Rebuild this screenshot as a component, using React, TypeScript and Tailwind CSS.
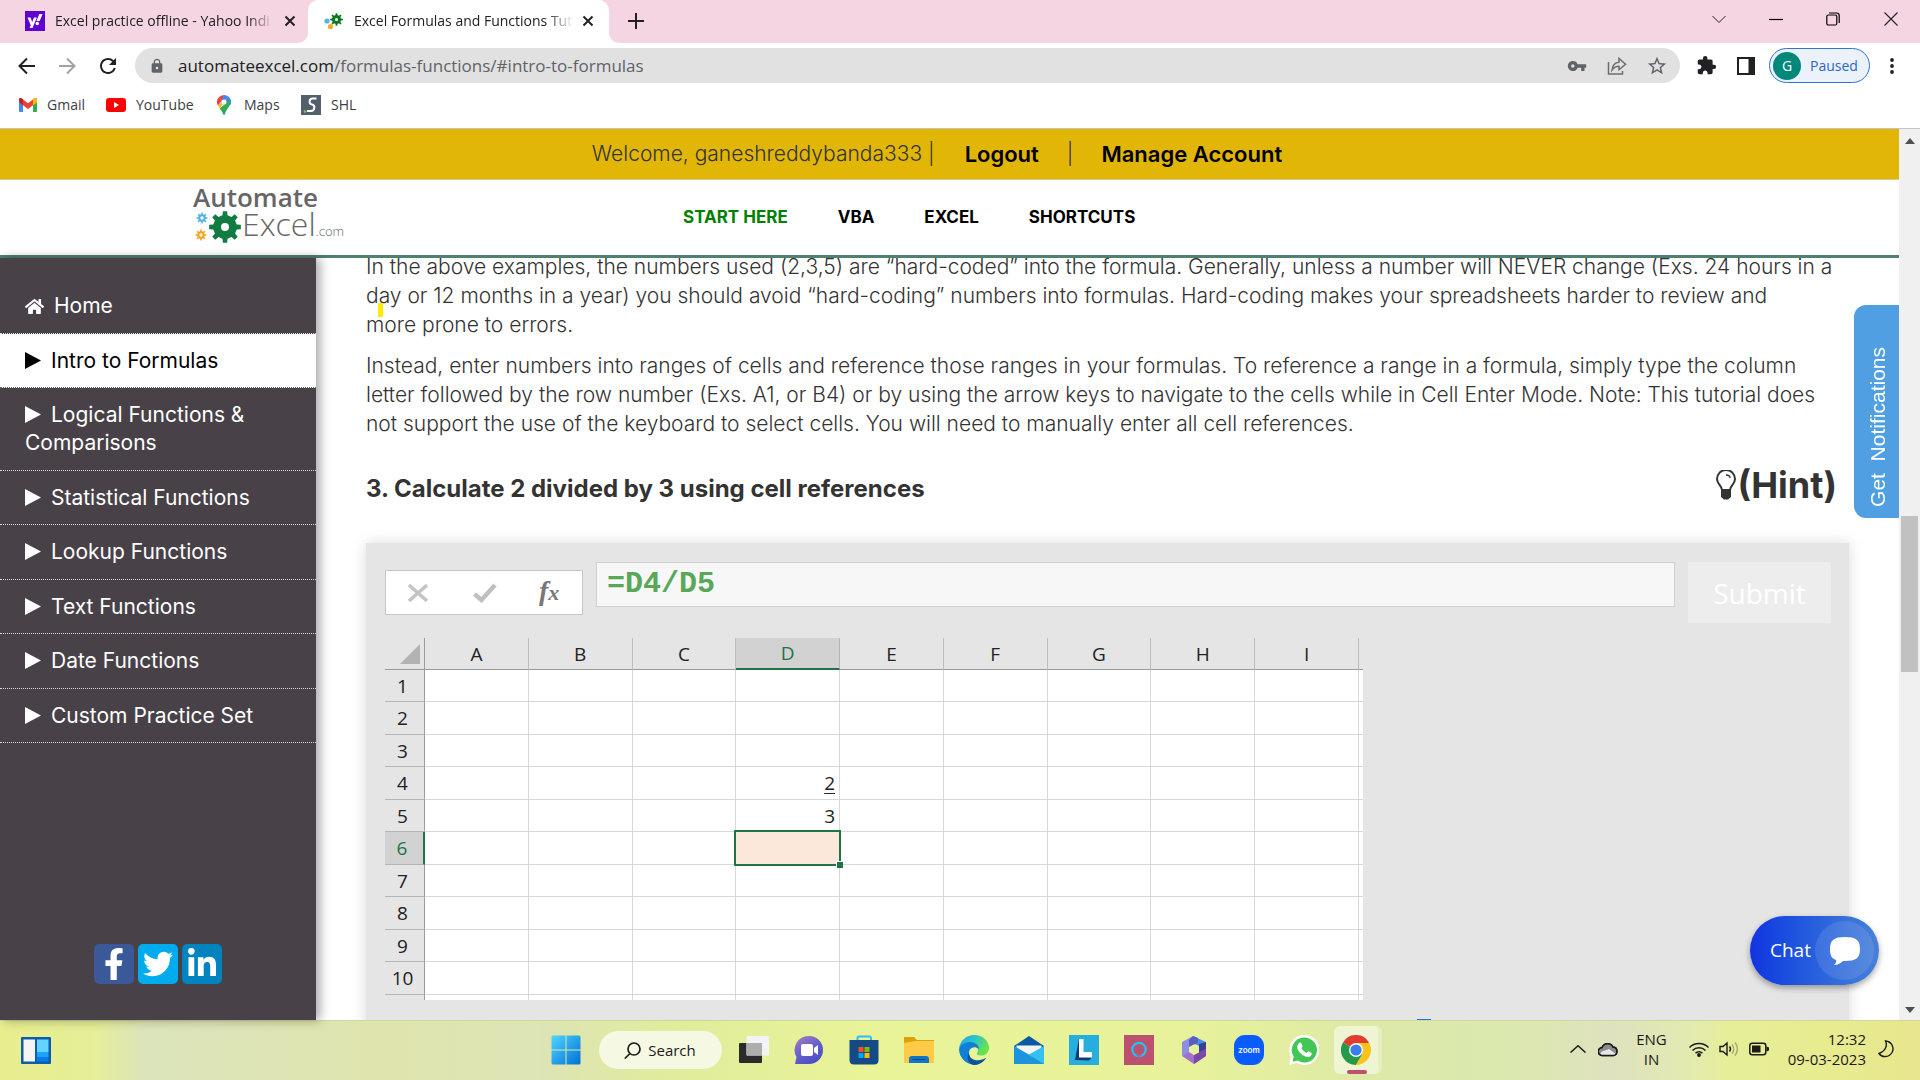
import React from "react";
import { FaFacebookF, FaHome, FaLinkedinIn, FaTwitter, FaYahoo } from "react-icons/fa";
import { MdExtension, MdLock, MdRefresh, MdStarOutline, MdVpnKey } from "react-icons/md";

const UI = "font-['Open_Sans','Noto_Sans',sans-serif]";
const SITE = "font-[Inter,sans-serif]";

function gearPath(cx: number, cy: number, rOuter: number, rInner: number, teeth: number, hole: number) {
  const pts: string[] = [];
  const step = (Math.PI * 2) / teeth;
  for (let i = 0; i < teeth; i++) {
    const a = i * step - Math.PI / 2;
    const at = (r: number, o: number) =>
      `${(cx + r * Math.cos(a + o * step)).toFixed(2)},${(cy + r * Math.sin(a + o * step)).toFixed(2)}`;
    pts.push(at(rInner, -0.27), at(rOuter, -0.17), at(rOuter, 0.17), at(rInner, 0.27));
  }
  return (
    `M${pts.join("L")}Z` +
    `M${cx - hole},${cy}a${hole},${hole} 0 1,0 ${hole * 2},0a${hole},${hole} 0 1,0 ${-hole * 2},0Z`
  );
}

function CloseX() {
  return (
    <svg className="size-3" viewBox="0 0 12 12" stroke="#202124" strokeWidth="2">
      <path d="M1.5 1.5l9 9M10.5 1.5l-9 9" />
    </svg>
  );
}

function TabStrip() {
  return (
    <header className="flex h-[43px] shrink-0 items-stretch bg-[#f6d5e3] text-sm text-[#202124]">
      <div className="flex w-[308px] items-center pb-[2px] pl-[25px] pr-3">
        <span className="flex size-5 shrink-0 items-center justify-center bg-[#6001d2] text-white">
          <FaYahoo className="size-4" />
        </span>
        <span className="ml-[10px] w-[219px] whitespace-nowrap [mask-image:linear-gradient(to_right,black_88%,transparent)]">
          Excel practice offline - Yahoo Indi
        </span>
        <button aria-label="Close tab" className="ml-[10px]">
          <CloseX />
        </button>
      </div>
      <div className="relative flex w-[301px] items-center rounded-t-[10px] bg-white pb-[2px] pl-4 pr-3">
        <svg className="absolute bottom-0 -left-[10px] size-[10px]" viewBox="0 0 10 10">
          <path d="M10 0v10H0A10 10 0 0 0 10 0Z" fill="#fff" />
        </svg>
        <svg className="absolute bottom-0 -right-[10px] size-[10px]" viewBox="0 0 10 10">
          <path d="M0 0v10h10A10 10 0 0 1 0 0Z" fill="#fff" />
        </svg>
        <svg className="h-5 w-[19px] shrink-0" viewBox="0 0 19 20">
          <circle cx="3" cy="10" r="2.6" fill="#4db8e8" />
          <circle cx="6.5" cy="15.5" r="2.6" fill="#f9a825" />
          <path d={gearPath(12.5, 8.5, 6.4, 4.6, 8, 1.6)} fill="#0a7a1e" fillRule="evenodd" />
        </svg>
        <span className="ml-[11px] w-[219px] whitespace-nowrap [mask-image:linear-gradient(to_right,black_88%,transparent)]">
          Excel Formulas and Functions Tut
        </span>
        <button aria-label="Close tab" className="ml-[9px]">
          <CloseX />
        </button>
      </div>
      <button aria-label="New tab" className="ml-[19px] flex items-center pb-[2px]">
        <svg className="size-4" viewBox="0 0 16 16" stroke="#202124" strokeWidth="2">
          <path d="M8 0v16M0 8h16" />
        </svg>
      </button>
      <div className="ml-auto flex items-center pr-[22px] pb-[6px]">
        <button aria-label="Search tabs" className="mr-[43px]">
          <svg className="size-[14px]" viewBox="0 0 14 14" fill="none" stroke="#222">
            <path d="M.5 4l6.5 6.5L13.5 4" />
          </svg>
        </button>
        <button aria-label="Minimize" className="mr-[43px]">
          <svg className="size-[14px]" viewBox="0 0 14 14" stroke="#000" strokeWidth="1.2">
            <path d="M0 7.5h14" />
          </svg>
        </button>
        <button aria-label="Restore" className="mr-11">
          <svg className="size-[14px]" viewBox="0 0 14 14" fill="none" stroke="#000" strokeWidth="1.2">
            <rect x=".8" y="3" width="10" height="10" rx="1.5" />
            <path d="M3 1h7.5A2.7 2.7 0 0 1 13.2 3.7V11" />
          </svg>
        </button>
        <button aria-label="Close window">
          <svg className="size-[14px]" viewBox="0 0 14 14" stroke="#222" strokeWidth="1.1">
            <path d="M.5 .5l13 13M13.5 .5l-13 13" />
          </svg>
        </button>
      </div>
    </header>
  );
}

function Toolbar() {
  return (
    <div className="flex h-[45px] shrink-0 items-center bg-white pl-[18px] pr-[26px]">
      <button aria-label="Back">
        <svg className="size-[18px]" viewBox="0 0 18 18" fill="none" stroke="#202124" strokeWidth="2">
          <path d="M17 9H2M9 1.5L1.5 9 9 16.5" />
        </svg>
      </button>
      <button aria-label="Forward" className="ml-[22px]">
        <svg className="size-[18px]" viewBox="0 0 18 18" fill="none" stroke="#a0a2a5" strokeWidth="2">
          <path d="M1 9h15M9 1.5L16.5 9 9 16.5" />
        </svg>
      </button>
      <button aria-label="Reload" className="ml-5">
        <MdRefresh className="size-6 text-[#202124]" />
      </button>
      <div className="ml-[15px] flex h-[35px] flex-1 items-center rounded-full bg-[#e1e1e1] pl-[14px] pr-3 text-[#5f6368]">
        <MdLock className="size-4 shrink-0" />
        <div role="textbox" aria-label="Address" className="ml-[13px] flex-1 text-[17px] leading-6 whitespace-nowrap">
          <span className="text-[#202124]">automateexcel.com</span>/formulas-functions/#intro-to-formulas
        </div>
        <button aria-label="Saved passwords">
          <MdVpnKey className="size-5" />
        </button>
        <button aria-label="Share" className="ml-5">
          <svg className="size-5" viewBox="0 0 20 20" fill="none" stroke="#6b6e72" strokeWidth="1.5">
            <path d="M1.5 6v12h14v-3" />
            <path d="M5 14c.5-5 3-7.5 7-7.8V2.5l6.5 5.700-6.5 5.5v-3.500c-3 0-5 1-7 3.800Z" />
          </svg>
        </button>
        <button aria-label="Bookmark" className="ml-[19px]">
          <MdStarOutline className="size-[22px]" />
        </button>
      </div>
      <button aria-label="Extensions" className="ml-4">
        <MdExtension className="size-[21px] text-[#202124]" />
      </button>
      <button aria-label="Side panel" className="ml-5">
        <svg className="size-[18px]" viewBox="0 0 18 18">
          <path d="M0 0h18v18H0ZM2 2v14h9.500V2Z" fill="#202124" fillRule="evenodd" />
        </svg>
      </button>
      <button className="ml-[14px] flex h-[35px] w-[101px] items-center rounded-full border border-[#2f73d9] bg-[#ebf2fc] pl-[3px] text-sm text-[#2c66c9]">
        <span className="flex size-7 items-center justify-center rounded-full bg-[#00897b] text-sm text-white">G</span>
        <span className="ml-[9px]">Paused</span>
      </button>
      <button aria-label="Menu" className="ml-5">
        <svg className="h-4 w-1" viewBox="0 0 4 16" fill="#202124">
          <circle cx="2" cy="2" r="1.9" />
          <circle cx="2" cy="8" r="1.9" />
          <circle cx="2" cy="14" r="1.9" />
        </svg>
      </button>
    </div>
  );
}

function Bookmarks() {
  return (
    <nav className="flex h-[41px] shrink-0 items-center border-b border-[#c4c4c4] bg-white pb-[6px] pl-[19px] text-sm text-[#3c4043]">
      <a href="#gmail" className="flex w-[87px] items-center gap-[10px]">
        <svg className="h-[14px] w-[18px]" viewBox="0 0 18 14">
          <path d="M0 2v11a1 1 0 0 0 1 1h3V5Z" fill="#4285f4" />
          <path d="M18 2v11a1 1 0 0 1-1 1h-3V5Z" fill="#34a853" />
          <path d="M14 1.5L18 1.5V4L14 7Z" fill="#fbbc04" />
          <path d="M0 1.8C0 .2 1.6-.4 2.8.5L9 5.2 15.2.5C16.4-.4 18 .2 18 1.8L14 5.5v1.800L9 11 4 7.300Z" fill="#ea4335" />
          <path d="M14 7.3V1.4L15.2.5C16.4-.4 18 .2 18 1.8V4Z" fill="#fbbc04" />
          <path d="M4 7.3V1.4L2.8.5C1.6-.4 0 .2 0 1.8V4Z" fill="#c5221f" />
        </svg>
        Gmail
      </a>
      <a href="#youtube" className="flex w-[111px] items-center gap-[10px]">
        <svg className="h-[14px] w-5" viewBox="0 0 20 14">
          <rect width="20" height="14" rx="3" fill="#f00" />
          <path d="M8 4v6l5-3Z" fill="#fff" />
        </svg>
        YouTube
      </a>
      <a href="#maps" className="flex w-[84px] items-center gap-[13px]">
        <svg className="h-5 w-[14px]" viewBox="0 0 14 20">
          <path d="M7 0a7 7 0 0 0-5.400 2.500L5 5.500Z" fill="#ea4335" />
          <path d="M7 0a7 7 0 0 1 4.500 1.600L5 9.300 4.300 5Z" fill="#4285f4" />
          <path d="M1.600 2.500A7 7 0 0 0 1 10.500L5 5.400Z" fill="#ea4335" />
          <path d="M11.500 1.600A7 7 0 0 1 13.200 10L9 9.500 5 9.300Z" fill="#4285f4" />
          <path d="M1 10.500L9 4l-4 6-2.300 3.200Z" fill="#fbbc04" />
          <path d="M13.500 5c1.500 5-4 8-5.500 14q-1 2-2 0C5.500 17 4 15 2.700 13.200Z" fill="#34a853" />
          <circle cx="7" cy="7" r="2.500" fill="#fff" />
        </svg>
        Maps
      </a>
      <a href="#shl" className="flex items-center gap-[10px]">
        <svg className="size-5" viewBox="0 0 20 20">
          <rect width="20" height="20" fill="#53606c" />
          <path d="M15.500 3.500h-4c-3.500 0-4 5.500-.5 6s3 6.500-1 6.500H6" fill="none" stroke="#fff" strokeWidth="2" />
          <circle cx="4" cy="16.500" r="1.300" fill="#6fd04f" />
        </svg>
        SHL
      </a>
    </nav>
  );
}

function SiteHeader() {
  return (
    <div className={`shrink-0 ${SITE}`}>
      <div className="flex h-[51px] items-center justify-center border-b border-[#d8c98a] bg-[#e2b607] pr-[25px] text-[21px] whitespace-nowrap text-[#333]">
        <span className="font-light">Welcome, ganeshreddybanda333 |</span>
        <a href="#logout" className="ml-[30px] text-[22px] font-semibold text-black">
          Logout
        </a>
        <span className="mx-[28px] font-light">|</span>
        <a href="#account" className="text-[22px] font-semibold text-black">
          Manage Account
        </a>
      </div>
      <div className="flex h-[78px] items-center border-b-[3px] border-[#4f8070] bg-white">
        <a href="#home" aria-label="Automate Excel" className={`ml-[193px] flex w-[490px] flex-col pb-[5px] ${UI} text-[#666]`}>
          <span className="text-[26px] leading-6 font-semibold">Automate</span>
          <span className="flex items-center leading-[30px]">
            <svg className="h-[34px] w-[49px]" viewBox="0 0 49 34">
              <path d={gearPath(9, 8, 5.5, 3.9, 8, 1.7)} fill="#4db3e6" fillRule="evenodd" />
              <path d={gearPath(8, 25, 5.5, 3.9, 8, 1.7)} fill="#f7a31c" fillRule="evenodd" />
              <path d={gearPath(32, 17, 16, 12, 8, 4)} fill="#107c41" fillRule="evenodd" />
            </svg>
            <span className="flex items-baseline font-light">
              <span className="text-[32px]">Excel</span>
              <span className="text-[13px]">.com</span>
            </span>
          </span>
        </a>
        <nav className="flex gap-[50px] text-[17px] font-bold text-black">
          <a href="#start" className="text-[#008000]">
            START HERE
          </a>
          <a href="#vba">VBA</a>
          <a href="#excel">EXCEL</a>
          <a href="#shortcuts">SHORTCUTS</a>
        </nav>
      </div>
    </div>
  );
}

const SECTIONS = [
  "Intro to Formulas",
  "Logical Functions & Comparisons",
  "Statistical Functions",
  "Lookup Functions",
  "Text Functions",
  "Date Functions",
  "Custom Practice Set",
];

function Sidebar() {
  return (
    <aside className={`relative z-10 flex w-[316px] shrink-0 flex-col bg-[#484248] text-[21px] text-white shadow-[4px_0_10px_rgba(0,0,0,0.35)] ${SITE}`}>
      <nav className="pt-[21px] leading-7">
        <a href="#home" className="flex items-center gap-[10px] border-b border-dotted border-white/80 py-[13px] pl-[25px]">
          <FaHome className="size-[19px]" />
          Home
        </a>
        {SECTIONS.map((s, i) => (
          <a
            key={s}
            href="#section"
            className={
              i === 0
                ? "block border-b border-dotted border-black/60 bg-white pt-[13px] pb-3 pr-10 pl-[25px] text-black"
                : "block border-b border-dotted border-white/80 py-[13px] pr-10 pl-[25px] even:pb-3"
            }
          >
            <svg className="mr-[10px] mb-1 inline h-[17px] w-4" viewBox="0 0 16 17" fill="currentColor">
              <path d="M0 0l16 8.500L0 17Z" />
            </svg>
            {s}
          </a>
        ))}
      </nav>
      <div className="mt-auto mb-9 flex justify-center gap-1">
        <a href="#facebook" aria-label="Facebook" className="flex size-10 items-end justify-center rounded-[5px] bg-[#3b5998] pb-1">
          <FaFacebookF className="h-8 w-5" />
        </a>
        <a href="#twitter" aria-label="Twitter" className="flex size-10 items-center justify-center rounded-[5px] bg-[#00aced]">
          <FaTwitter className="size-[30px]" />
        </a>
        <a href="#linkedin" aria-label="LinkedIn" className="flex size-10 items-center justify-center rounded-[5px] bg-[#0083be]">
          <FaLinkedinIn className="size-8" />
        </a>
      </div>
    </aside>
  );
}

const COLS = ["A", "B", "C", "D", "E", "F", "G", "H", "I"];
const ROWS = [1, 2, 3, 4, 5, 6, 7, 8, 9, 10];

function Sheet() {
  return (
    <table className={`mt-[15px] w-[978px] table-fixed border-separate border-spacing-0 ${UI} text-[19px] leading-6 text-[#222]`}>
      <colgroup>
        <col className="w-10" />
        {COLS.map((c) => (
          <col key={c} />
        ))}
        <col className="w-1" />
      </colgroup>
      <thead>
        <tr className="h-8">
          <th aria-label="Select all" className="border-r border-b border-[#9b9b9b] p-0">
            <svg className="ml-auto mr-1 block size-5" viewBox="0 0 20 20">
              <path d="M20 0v20H0Z" fill="#b3b3b3" />
            </svg>
          </th>
          {COLS.map((c) => (
            <th
              key={c}
              className={
                c === "D"
                  ? "border-r border-b-2 border-r-[#b5b5b5] border-b-[#217346] bg-[#d2d2d2] p-0 font-normal text-[#217346]"
                  : "border-r border-b border-r-[#bdbdbd] border-b-[#9b9b9b] p-0 font-normal"
              }
            >
              {c}
            </th>
          ))}
          <th className="border-b border-[#9b9b9b] p-0" />
        </tr>
      </thead>
      <tbody>
        {ROWS.map((r) => (
          <tr key={r} className={r % 2 ? "h-8" : "h-[33px]"}>
            <th
              className={
                r === 6
                  ? "border-r-2 border-b border-r-[#217346] border-b-[#b5b5b5] bg-[#d2d2d2] p-0 pr-1 font-normal text-[#217346]"
                  : "border-r border-b border-r-[#9b9b9b] border-b-[#b5b5b5] p-0 pr-1 font-normal"
              }
            >
              {r}
            </th>
            {COLS.map((c) => (
              <td key={c} className="relative border-r border-b border-[#d8d8d8] bg-white p-0 pr-1 text-right">
                {c === "D" && r === 4 && <span className="underline underline-offset-[3px]">2</span>}
                {c === "D" && r === 5 && "3"}
                {c === "D" && r === 6 && (
                  <span className="absolute -inset-[2px] z-10 border-2 border-[#217346] bg-[#fce8da]">
                    <span className="absolute -right-1 -bottom-1 size-[7px] border-t border-l border-white bg-[#217346]" />
                  </span>
                )}
              </td>
            ))}
            <td className="border-b border-[#d8d8d8] bg-white p-0" />
          </tr>
        ))}
        <tr className="h-[5px]">
          <th className="border-r border-[#9b9b9b] p-0" />
          {COLS.map((c) => (
            <td key={c} className="border-r border-[#d8d8d8] bg-white p-0" />
          ))}
          <td className="bg-white p-0" />
        </tr>
      </tbody>
    </table>
  );
}

function Lesson() {
  return (
    <main className={`relative flex-1 overflow-hidden bg-white px-[50px] ${SITE} text-[#333]`}>
      <span className="absolute top-[45px] left-[62px] h-[14px] w-[5px] bg-[#ffea00]" />
      <div className="-mt-[6px] text-[21px] leading-[29px] font-light whitespace-nowrap">
        <p className="mb-3">
          In the above examples, the numbers used (2,3,5) are “hard-coded” into the formula. Generally, unless a number will NEVER change (Exs. 24 hours in a
          <br />
          day or 12 months in a year) you should avoid “hard-coding” numbers into formulas. Hard-coding makes your spreadsheets harder to review and
          <br />
          more prone to errors.
        </p>
        <p>
          Instead, enter numbers into ranges of cells and reference those ranges in your formulas. To reference a range in a formula, simply type the column
          <br />
          letter followed by the row number (Exs. A1, or B4) or by using the arrow keys to navigate to the cells while in Cell Enter Mode. Note: This tutorial does
          <br />
          not support the use of the keyboard to select cells. You will need to manually enter all cell references.
        </p>
      </div>
      <div className="mt-6 flex h-[50px] items-center justify-between pr-3">
        <h2 className="mt-1 text-2xl font-bold">3. Calculate 2 divided by 3 using cell references</h2>
        <button className="mb-1 flex items-center text-4xl font-bold">
          <svg className="mr-[2px] h-[30px] w-5" viewBox="0 0 20 30" fill="none" stroke="#333" strokeWidth="2">
            <path d="M6 20c0-4-5-6-5-11a9 9 0 0 1 18 0c0 5-5 7-5 11Z" />
            <path d="M10 5c2.500 0 4 1.500 4 3" strokeWidth="1.3" />
            <path d="M5 19h10v8l-3 2.500H8L5 27Z" fill="#333" stroke="none" />
          </svg>
          (Hint)
        </button>
      </div>
      <section className="mt-[31px] h-[560px] bg-[#e5e5e5] pt-[19px] pr-[18px] pl-[19px] shadow-[0_0_14px_rgba(0,0,0,0.14)]">
        <div className="flex items-start gap-[13px]">
          <div className="mt-2 flex h-[45px] w-[198px] items-center border border-[#c6c6c6] bg-white px-[22px]">
            <button aria-label="Cancel">
              <svg className="size-5" viewBox="0 0 20 20" stroke="#c4c4c4" strokeWidth="3.5">
                <path d="M1 2l18 16M19 2L1 18" />
              </svg>
            </button>
            <button aria-label="Enter" className="ml-[45px]">
              <svg className="h-5 w-6" viewBox="0 0 24 20" fill="none" stroke="#c0c0c0" strokeWidth="4.5">
                <path d="M1.500 11l7 6L22 2" />
              </svg>
            </button>
            <button aria-label="Insert function" className="mb-1 ml-[42px] flex items-baseline font-['Liberation_Serif',serif] text-[#777] italic">
              <span className="text-[28px] leading-7 font-bold">f</span>
              <span className="text-[22px] leading-5 font-bold">x</span>
            </button>
          </div>
          <input
            aria-label="Formula"
            defaultValue="=D4/D5"
            className="h-[45px] min-w-0 flex-1 border border-[#cfcfcf] bg-[#f7f7f7] px-[10px] pb-px font-['Liberation_Mono',monospace] text-[30px] font-bold text-[#58a858]"
          />
          <button className={`h-[61px] w-[143px] bg-[#ededed] text-[28px] text-white ${UI}`}>Submit</button>
        </div>
        <Sheet />
      </section>
      <span className="absolute bottom-0 left-[1101px] h-px w-[14px] bg-[#1a73e8]" />
    </main>
  );
}

function Page() {
  return (
    <div className="flex min-h-0 flex-1">
      <div className="relative flex min-w-0 flex-1 flex-col">
        <SiteHeader />
        <div className="flex min-h-0 flex-1">
          <Sidebar />
          <Lesson />
        </div>
        <button className="absolute top-44 right-0 z-20 flex h-[213px] w-[45px] items-center justify-start rounded-l-xl bg-[#4f9fe2] pt-[30px] pl-3 font-['Liberation_Sans',sans-serif] text-[21px] leading-6 whitespace-pre text-white">
          <span className="rotate-180 [writing-mode:vertical-rl]">Get  Notifications</span>
        </button>
        <button
          className={`absolute right-5 bottom-[35px] z-20 flex h-[69px] w-[129px] items-center rounded-full bg-gradient-to-r from-[#1233e0] to-[#4880d8] pl-5 text-[19px] text-white shadow-[0_3px_6px_rgba(0,0,0,0.35)] ${UI}`}
        >
          Chat
          <span className="mr-[5px] ml-auto flex size-[59px] items-center justify-center rounded-full bg-white/10">
            <svg className="h-7 w-[30px]" viewBox="0 0 30 28" fill="#fff">
              <path d="M15 0C26 0 30 3 30 12s-4 12-15 12h-2c-2 2-5 4-9 4 2-1.500 2.500-3.500 2-5C1.500 21.500 0 18 0 12 0 3 4 0 15 0Z" />
            </svg>
          </span>
        </button>
      </div>
      <div className="flex w-[21px] shrink-0 flex-col items-center bg-[#f0f0f0] py-[7px]">
        <svg className="mt-[2px] h-[6px] w-[10px]" viewBox="0 0 10 6" fill="#505050">
          <path d="M0 6l5-6 5 6Z" />
        </svg>
        <div className="mt-[372px] h-[156px] w-[17px] bg-[#c1c1c1]" />
        <svg className="mt-auto h-[6px] w-[10px]" viewBox="0 0 10 6" fill="#505050">
          <path d="M0 0l5 6 5-6Z" />
        </svg>
      </div>
    </div>
  );
}

function TaskButton({ label, children }: { label: string; children: React.ReactNode }) {
  return (
    <button aria-label={label} className="flex h-full w-[55px] items-center justify-center">
      <svg className="size-[30px]" viewBox="0 0 30 30">
        {children}
      </svg>
    </button>
  );
}

function Taskbar() {
  return (
    <footer className="grid h-[60px] shrink-0 grid-cols-[1fr_auto_1fr] items-center bg-[linear-gradient(90deg,#e8ee8e_0%,#e5ee98_5%,#dce4bb_7.5%,#dfe4ae_20%,#dde4b5_28%,#e1ec9c_35%,#e9f398_45%,#e8f29a_62%,#dce9a8_72%,#dbe8b0_79%,#dfe2bf_84%,#e3eab0_88%,#e6ee99_90%,#e8ec90_95%,#e7e68e_100%)] text-[#1b1b1b] shadow-[inset_0_1px_0_#d0d998]">
      <button aria-label="Widgets" className="ml-[21px] w-[30px]">
        <svg className="h-[27px] w-[30px]" viewBox="0 0 30 27">
          <rect width="30" height="27" rx="1" fill="#0f5cab" />
          <rect x="2.5" y="2.5" width="11.5" height="22" fill="#f4f4f4" />
          <rect x="16" y="2.5" width="11.5" height="12.5" fill="#62d4ff" />
          <rect x="16" y="15" width="11.5" height="5" fill="#18a4ff" />
          <rect x="16" y="20" width="11.5" height="4.5" fill="#007de8" />
        </svg>
      </button>
      <div className="flex h-[60px] items-center">
        <TaskButton label="Start">
          <defs>
            <linearGradient id="win" x1="0" y1="0" x2="1" y2="1">
              <stop offset="0" stopColor="#4fd6ff" />
              <stop offset="1" stopColor="#0070d4" />
            </linearGradient>
          </defs>
          <path d="M.5 2q0-1.500 1.500-1.500h12.500v14H.5ZM15.500.5H28q1.500 0 1.500 1.500v12.500h-14ZM.5 15.500h14v14H2q-1.500 0-1.500-1.500ZM15.500 15.500h14V28q0 1.500-1.500 1.500H15.500Z" fill="url(#win)" />
        </TaskButton>
        <button className="mx-[5px] flex h-[38px] w-[123px] items-center justify-center gap-[7px] rounded-full bg-[#f5f8e2] text-[15px]">
          <svg className="size-[17px]" viewBox="0 0 17 17" fill="none" stroke="#1b1b1b" strokeWidth="1.7">
            <circle cx="10" cy="7" r="6" />
            <path d="M6 11.500L.8 16.500" />
          </svg>
          Search
        </button>
        <TaskButton label="Task view">
          <rect x="0" y="8" width="23" height="20" rx="1" fill="#2b2b2b" />
          <rect x="7.5" y="1" width="22.5" height="19.5" rx="1" fill="#f3f3f3" />
          <path d="M7.500 8H23v12.500H7.500Z" fill="#aeaeae" />
        </TaskButton>
        <TaskButton label="Chat">
          <defs>
            <linearGradient id="teams" x1="0" y1="0" x2=".6" y2="1">
              <stop offset="0" stopColor="#b07fc0" />
              <stop offset=".5" stopColor="#6a63c8" />
              <stop offset="1" stopColor="#4c4fc4" />
            </linearGradient>
          </defs>
          <path d="M15 1a14 14 0 1 1 0 28H1l1.500-7A14 14 0 0 1 15 1Z" fill="url(#teams)" />
          <rect x="7" y="9" width="12" height="12" rx="2" fill="#fff" />
          <path d="M20 13l4-3v10l-4-3Z" fill="#fff" />
        </TaskButton>
        <TaskButton label="Microsoft Store">
          <path d="M8.500 6V3q0-1.500 1.500-1.500h10.500q1.500 0 1.500 1.500v3" fill="none" stroke="#35bdf2" strokeWidth="2" />
          <path d="M.5 5h29v20q0 4.500-4.500 4.500H5Q.5 29.500.5 25Z" fill="#164a86" />
          <path d="M9.500 12h5v5h-5Z" fill="#f25022" />
          <path d="M15.500 12h5v5h-5Z" fill="#7fba00" />
          <path d="M9.500 18h5v5h-5Z" fill="#00a4ef" />
          <path d="M15.500 18h5v5h-5Z" fill="#ffb900" />
        </TaskButton>
        <TaskButton label="File Explorer">
          <path d="M0 2h10l3 3h17v6H0Z" fill="#dfa00c" />
          <path d="M0 8l11-2h19v22H0Z" fill="#fdcb46" />
          <path d="M5 28v-4q0-3 3-3h14q3 0 3 3v4Z" fill="#1174c4" />
          <path d="M8.500 24.500h13" stroke="#0a4b8c" strokeWidth="1" />
        </TaskButton>
        <TaskButton label="Edge">
          <defs>
            <linearGradient id="edgeTop" x1="0" y1="0" x2="1" y2=".5">
              <stop offset="0" stopColor="#1fa5e6" />
              <stop offset=".5" stopColor="#2fc4c8" />
              <stop offset="1" stopColor="#6ae24a" />
            </linearGradient>
          </defs>
          <path d="M0 14C1 5 8 0 15 0c9 0 15 6 15 13 0 5-4 7.500-8 7.500-3 0-5-1-4-2.500 3-4-1-9-7-9-6 0-10 3-11 5Z" fill="url(#edgeTop)" />
          <path d="M0 14c2-5 6-7 11-7 5 0 9 3 9 7-6-4-10 0-10 4 0 6 5 10 9 11.500C8 31 0 23 0 14Z" fill="#0f80d8" />
          <path d="M10 18c0 6 6 8 11 7 3-.5 5-1.500 6.500-2.500C25 27 20 30 15 30 9 29.500 7 22 10 18Z" fill="#0c529c" />
        </TaskButton>
        <TaskButton label="Mail">
          <path d="M0 11L15 1l15 10-4 8H4Z" fill="#0b58a5" />
          <path d="M2.500 10.500h25V20h-25Z" fill="#f4f4f4" />
          <path d="M0 11l15 8.500L30 11v18H0Z" fill="#35c0f2" />
          <path d="M0 11l30 18H0Z" fill="#1c93dd" />
        </TaskButton>
        <TaskButton label="LinkedIn Learning">
          <path d="M0 0h30v30H0Z" fill="#25aede" />
          <path d="M10 4L6 25l14 .5 3-3-13-1Z" fill="#0c3c72" />
          <path d="M10 4h4.500v13H23v5.500H10Z" fill="#fff" />
        </TaskButton>
        <TaskButton label="Alexa">
          <path d="M0 0h30v30H0Z" fill="#bc506e" />
          <circle cx="15" cy="14.5" r="6.7" fill="none" stroke="#19c8f5" strokeWidth="2.2" />
          <path d="M12 20.300h6l-3 1.700Z" fill="#bc506e" />
        </TaskButton>
        <TaskButton label="Microsoft 365">
          <path d="M14 1l13 6v9l-7-1v-4l-6-3-4 2Z" fill="#3f93ee" />
          <path d="M20 9l7-2v14l-7-3Z" fill="#3a3f94" />
          <path d="M14 1L3 7v14l7-3v-8l8-6Z" fill="#8f8fe2" />
          <path d="M14 1l5 2v5l-5 2-4 2V5Z" fill="#5a5fc0" />
          <path d="M3 21l7-4 5 3 12-6v7l-12 8Z" fill="#a06fd0" />
          <path d="M15 20l12-6v7l-12 8Z" fill="#7a48a8" />
          <path d="M11 12l4-2.500 5 2.500v5l-5 3-4-3Z" fill="#e8f29a" />
        </TaskButton>
        <TaskButton label="Zoom">
          <rect width="30" height="30" rx="11" fill="#0b5cff" />
          <text x="15" y="18" textAnchor="middle" fontSize="8" fontWeight="600" fill="#fff" fontFamily="Inter, sans-serif">
            zoom
          </text>
        </TaskButton>
        <TaskButton label="WhatsApp">
          <path d="M15 0a15 15 0 1 1-7 28L0 30l2-8A15 15 0 0 1 15 0Z" fill="#fff" />
          <path d="M15 2.500a12.500 12.500 0 1 1-6.300 23L3.500 26.800l1.300-5A12.500 12.500 0 0 1 15 2.500Z" fill="#43c655" />
          <path d="M10 8q1.500-1 2.500.5l1 2.500q0 1-1.200 2 2 3.500 5.200 5 1.500-2 2.500-1.600l2.500 1.400q1 2-1.500 3.700-3 1.500-7.500-1.500-4-3-5-6-1-3.500 1.500-6Z" fill="#fff" />
        </TaskButton>
        <button aria-label="Chrome" className="relative ml-[2px] flex h-12 w-12 items-center justify-center rounded-md border-r-4 border-[#e6efbd] bg-[#eff5d2]">
          <svg className="size-[30px]" viewBox="0 0 30 30">
            <path d="M15 15L2 7.500A15 15 0 0 1 28 7.500Z" fill="#e33b2e" />
            <path d="M15 15L2 7.500A15 15 0 0 0 15 30l6.500-11Z" fill="#24994a" />
            <path d="M15 8h13.300A15 15 0 0 1 15 30l6.500-11Z" fill="#fcc31e" />
            <circle cx="15" cy="15" r="7" fill="#fff" />
            <circle cx="15" cy="15" r="5.6" fill="#3b7de8" />
          </svg>
          <span className="absolute bottom-0 left-[13px] h-1 w-5 rounded-full bg-[#bc506e]" />
        </button>
      </div>
      <div className="flex items-center justify-end pr-[26px] pb-[2px] text-[15px] leading-5">
        <svg className="h-2 w-4" viewBox="0 0 16 8" fill="none" stroke="#1b1b1b" strokeWidth="1.5">
          <path d="M.5 7.500L8 .8l7.500 6.700" />
        </svg>
        <svg className="ml-3 h-[15px] w-5" viewBox="0 0 20 15" stroke="#1b1b1b" strokeWidth="1.4">
          <path d="M4.500 13.500a4 4 0 0 1-.5-8 6 6 0 0 1 11-.5 4.300 4.300 0 0 1 .5 8.500Z" fill="#8c8c8c" />
          <path d="M4 13.500c-2-1-2-3 0-4L11 7l7 5-2 1.500Z" fill="#e8e8e8" stroke="none" />
          <path d="M4.500 13.500a4 4 0 0 1-.5-8 6 6 0 0 1 11-.5 4.300 4.300 0 0 1 .5 8.500Z" fill="none" />
        </svg>
        <div className="ml-[18px] text-center">
          ENG
          <br />
          IN
        </div>
        <svg className="ml-[22px] h-[15px] w-5" viewBox="0 0 20 15" fill="none" stroke="#1b1b1b" strokeWidth="1.5">
          <path d="M.5 5.500a13.500 13.500 0 0 1 19 0M3.500 8.500a9.300 9.300 0 0 1 13 0M6.500 11.300a5 5 0 0 1 7 0" />
          <circle cx="10" cy="13" r="1.2" fill="#1b1b1b" />
        </svg>
        <svg className="ml-[10px] h-4 w-5" viewBox="0 0 20 16" fill="none" stroke="#1b1b1b" strokeWidth="1.4">
          <path d="M1 5.500h3L8 2v12l-4-3.500H1ZM10.500 5.500a4 4 0 0 1 0 5" />
          <path d="M13 3.500a7 7 0 0 1 0 9M16 1.500a10 10 0 0 1 0 13" stroke="#1b1b1b55" />
        </svg>
        <svg className="ml-[10px] h-[14px] w-5" viewBox="0 0 20 14">
          <rect x=".8" y="1.3" width="16" height="11.4" rx="2.5" fill="none" stroke="#1b1b1b" strokeWidth="1.5" />
          <rect x="3" y="3.5" width="8.5" height="7" fill="#1b1b1b" />
          <path d="M17.500 4.500L20 5.500v3l-2.500 1Z" fill="#1b1b1b" />
        </svg>
        <div className="ml-[19px] text-right">
          12:32
          <br />
          09-03-2023
        </div>
        <svg className="ml-3 h-[18px] w-4" viewBox="0 0 16 18" fill="none" stroke="#1b1b1b" strokeWidth="1.4">
          <path d="M7.500 1c2 4 .5 10-6.500 12.500 3 4.500 10 4 13-1C16.500 8 14 1.500 7.500 1Z" />
        </svg>
      </div>
    </footer>
  );
}

export default function App() {
  return (
    <div className={`flex h-screen flex-col overflow-hidden bg-white ${UI}`}>
      <TabStrip />
      <Toolbar />
      <Bookmarks />
      <Page />
      <Taskbar />
    </div>
  );
}
